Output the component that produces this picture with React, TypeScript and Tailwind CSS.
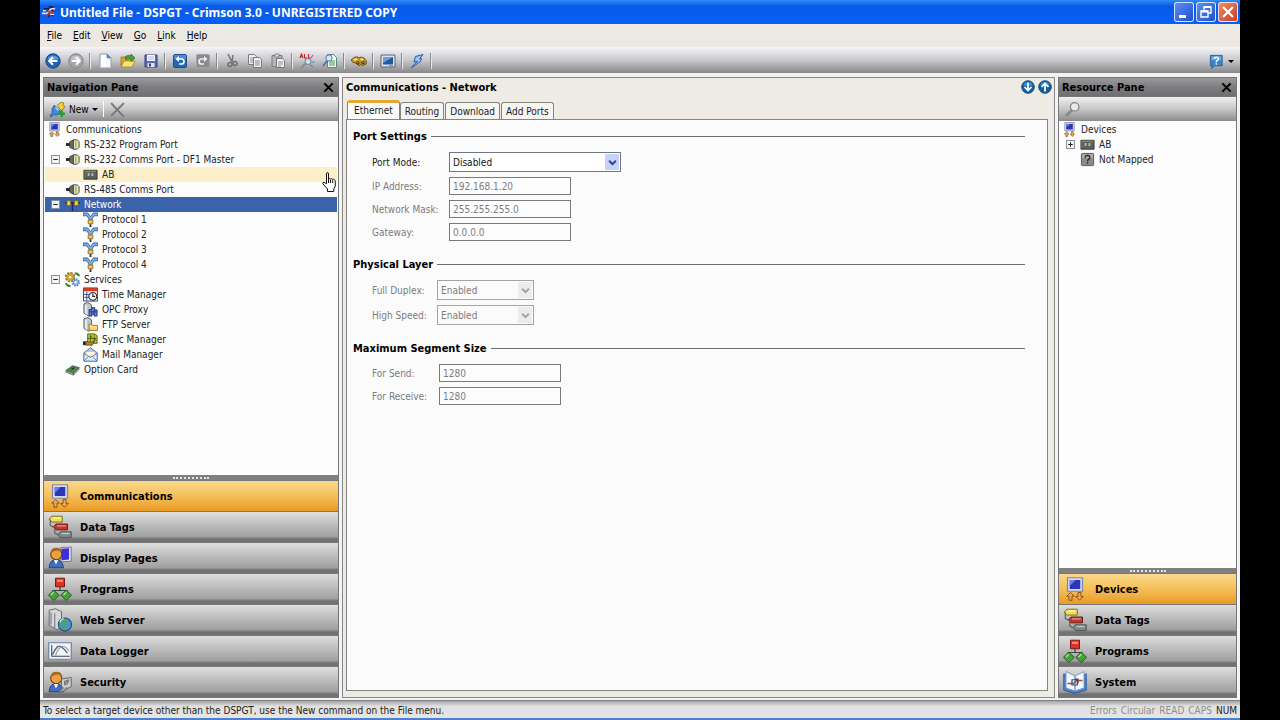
import type { ReactNode } from 'react';
import clsx from 'clsx';

type IconProps = { className?: string };

function Svg({ className = 'size-4', children }: IconProps & { children: ReactNode }) {
  return (
    <svg viewBox="0 0 16 16" className={clsx('shrink-0', className)} fill="none" aria-hidden="true">
      {children}
    </svg>
  );
}

/* ---------- window and toolbar icons ---------- */

const AppIcon = () => (
  <Svg className="size-[15px]">
    <path d="M3 4h5v9M8 2h4v10" stroke="#12235c" strokeWidth="1.800" />
    <path d="M1 9h5l5-5h4" stroke="#f4d9cf" strokeWidth="1.800" />
    <path d="M4 7h8M5 12l6-4h3" stroke="#b8402f" strokeWidth="1.500" />
    <path d="M2 6h3M10 10h4" stroke="#e8edff" strokeWidth="1.200" />
  </Svg>
);

const BackIcon = () => (
  <Svg>
    <circle cx="8" cy="8" r="7.2" fill="#1f62b4" stroke="#174a8c" />
    <path d="M2.5 6A6 6 0 0 1 13.5 6Q8 8 2.5 6z" fill="#5b9be0" />
    <path d="M12.5 8H4.5M8 4.3L4.2 8L8 11.7" stroke="#fff" strokeWidth="2" />
  </Svg>
);

const ForwardIcon = () => (
  <Svg>
    <circle cx="8" cy="8" r="7.2" fill="#a5a5a5" stroke="#858585" />
    <path d="M2.5 6A6 6 0 0 1 13.5 6Q8 8 2.5 6z" fill="#c4c4c4" />
    <path d="M3.5 8h8M8 4.3L11.8 8L8 11.7" stroke="#fff" strokeWidth="2" />
  </Svg>
);

const NewFileIcon = () => (
  <Svg>
    <path d="M3 1h7l4 4v10H3z" fill="#f4f8fd" stroke="#93a0b3" />
    <path d="M10 1v4h4z" fill="#4e8fd6" stroke="#4a7cb8" strokeWidth=".7" />
    <path d="M4 2h5v12H4z" fill="#fff" />
  </Svg>
);

const OpenIcon = () => (
  <Svg>
    <path d="M1 13V4h4l1 2h6v7z" fill="#d9a62c" stroke="#9a7420" strokeWidth=".8" />
    <path d="M1 14l3-6h11l-3 6z" fill="#fbe37b" stroke="#a98220" strokeWidth=".8" />
    <path d="M5 4q3-3 6-1V1l4 4-4 3.500V6Q8 4 6 7z" fill="#3fa535" stroke="#226b1d" strokeWidth=".6" />
  </Svg>
);

const SaveIcon = () => (
  <Svg>
    <path d="M2 2h12v12H2z" fill="#5a6bb5" stroke="#34417f" />
    <path d="M4 2h8v6H4z" fill="#f5f7fc" />
    <path d="M5 4h6M5 6h6" stroke="#b6bdd4" />
    <path d="M4.500 10h7v4h-7z" fill="#dfe3ee" />
    <path d="M6 10.500h2v3H6z" fill="#34417f" />
  </Svg>
);

const UndoIcon = () => (
  <Svg>
    <rect x="1.500" y="1.500" width="13" height="13" rx="1.500" fill="#2167b8" stroke="#1a4f92" />
    <path d="M2 2h12v4H2z" fill="#4a8dd6" />
    <path d="M5 6h4.500a2.300 2.300 0 0 1 0 5H7" stroke="#fff" strokeWidth="1.700" />
    <path d="M3.500 6L7 3v6z" fill="#fff" />
  </Svg>
);

const RedoIcon = () => (
  <Svg>
    <rect x="1.500" y="1.500" width="13" height="13" rx="1.500" fill="#8b8b8b" stroke="#a0a0a0" />
    <path d="M11 6H6.500a2.300 2.300 0 0 0 0 5H9" stroke="#eee" strokeWidth="1.700" />
    <path d="M12.500 6L9 3v6z" fill="#eee" />
  </Svg>
);

const CutIcon = () => (
  <Svg>
    <path d="M4 1l4 8M9 2L8 9" stroke="#777" strokeWidth="1.600" />
    <circle cx="6" cy="11.500" r="2" stroke="#6d6d6d" strokeWidth="1.400" />
    <circle cx="11" cy="10.500" r="2" stroke="#6d6d6d" strokeWidth="1.400" />
  </Svg>
);

const CopyIcon = () => (
  <Svg>
    <path d="M1.500 1.500h6l2 2v8h-8z" fill="#eee" stroke="#808080" />
    <path d="M3 5h4M3 7h4M3 9h3" stroke="#999" />
    <path d="M6.500 4.500h6l2 2v8h-8z" fill="#f2f2f2" stroke="#777" />
    <path d="M8 8h5M8 10h5M8 12h5" stroke="#8a8a8a" />
  </Svg>
);

const PasteIcon = () => (
  <Svg>
    <path d="M2 2.500h10v11H2z" fill="#b5b5b5" stroke="#7b7b7b" />
    <path d="M5 1h4v3H5z" fill="#ddd" stroke="#7b7b7b" strokeWidth=".8" />
    <path d="M6.500 5.500h6l2 2v7h-8z" fill="#f1f1f1" stroke="#777" />
    <path d="M8 9h5M8 11h5M8 13h3" stroke="#8f8f8f" />
  </Svg>
);

const FindAllIcon = () => (
  <Svg>
    <path d="M1 5l1.500-4L4 5M1.500 3.800h2M5.500 1v4h2.500M9.500 1v4H12" stroke="#c62424" strokeWidth="1.100" />
    <path d="M7 10l-5 5" stroke="#8b8b8b" strokeWidth="2" />
    <circle cx="9" cy="8.500" r="3" fill="#c9e2f6" stroke="#6c8198" />
    <path d="M12 5l2-3M12.500 9h3M11 12l3 2" stroke="#5a84b4" strokeWidth="1.200" />
  </Svg>
);

const FindPageIcon = () => (
  <Svg>
    <path d="M5.500 1.500h6l3 3v10h-9z" fill="#f5fbf5" stroke="#5b8a6a" />
    <path d="M7 8h6M7 10h6M7 12h6" stroke="#3f9a50" strokeWidth="1.200" />
    <circle cx="7" cy="5" r="3.200" fill="#cfe6f8" stroke="#52779c" />
    <path d="M5 8l-4 5" stroke="#50749b" strokeWidth="2" />
  </Svg>
);

const BinocularsIcon = () => (
  <Svg>
    <path d="M0 7l4-3h3l1 1 2-1 3 1 3 4-1 2-3 1.500-2-1L8 13l-3-3-3-.500z" fill="#c4931f" stroke="#5f430a" strokeWidth=".8" />
    <path d="M2 6.500l3-1.500 2 1.500-3 1.500zM9 6l2-1 2 2-2 1z" fill="#f7df7e" />
    <circle cx="6.800" cy="10" r="1.700" fill="#4b3a16" />
    <circle cx="12" cy="9.500" r="1.700" fill="#4b3a16" />
    <path d="M6.300 9.600h1M11.500 9.100h1" stroke="#f2e2ae" />
  </Svg>
);

const DisplayIcon = () => (
  <Svg>
    <path d="M1 2h14v12H1z" fill="#dbe2ea" stroke="#5a6778" />
    <path d="M3 4h10v7.500H3z" fill="#2556a0" />
    <path d="M3 4h10L3 10z" fill="#6f9ed8" />
    <path d="M9 12.800h4" stroke="#6c7a8c" />
  </Svg>
);

const LightningIcon = () => (
  <Svg>
    <path d="M14 1.500L6.500 3.500 5 9l3.500-.800L2 15l9.500-6.500 1-3-2 .500z" fill="#9cc6f4" stroke="#2a5aa5" />
  </Svg>
);

const HelpIcon = () => (
  <Svg className="size-[15px]">
    <path d="M1.500 1.500h12.500v11H6L3 15.500v-3H1.500z" fill="#3d84c8" stroke="#28619e" />
    <path d="M2.500 2.500h10.500v4H2.500z" fill="#6fabe0" />
    <path d="M5.700 5.300q0-2 2.200-2t2.200 1.900q0 1.200-1.300 1.700T7.800 9" stroke="#fff" strokeWidth="1.500" />
    <path d="M7 9.900h1.700v1.500H7z" fill="#fff" />
  </Svg>
);

const PlugIcon = () => (
  <Svg className="size-[17px]">
    <path d="M8 4q3-4 6-2-1 1-1 2t2 1q-1 3-4 4z" fill="#f0d244" stroke="#8b7517" strokeWidth=".8" />
    <path d="M5 4l6 6-3 3H4l-2 2-1-1 2-3V7z" fill="#3f8de0" stroke="#1c4d8c" strokeWidth=".8" />
    <path d="M6 6l3 3" stroke="#bfe0ff" strokeWidth="1.300" />
    <path d="M12 9v6M9 12h6" stroke="#2f9a38" strokeWidth="2.400" />
  </Svg>
);

const DeleteIcon = () => (
  <Svg className="size-[17px]">
    <path d="M2 2l12 13M14 2L2 14" stroke="#777" strokeWidth="1.800" />
  </Svg>
);

const SearchIcon = () => (
  <Svg className="size-[17px]">
    <path d="M8 8l-6 6" stroke="#888" strokeWidth="2.600" />
    <circle cx="10" cy="5.500" r="4" fill="#e9e9e9" stroke="#858585" strokeWidth="1.200" />
  </Svg>
);

const CloseIcon = () => (
  <Svg className="size-[11px]">
    <path d="M2 2l12 12M14 2L2 14" stroke="#000" strokeWidth="3" />
  </Svg>
);

function RoundArrow({ up = false }: { up?: boolean }) {
  return (
    <Svg className="size-[14px]">
      <circle cx="8" cy="8" r="7.200" fill="#175f9c" stroke="#0f4675" />
      <path d="M2.500 6A6 6 0 0 1 13.500 6Q8 8 2.500 6z" fill="#3f8fd0" />
      <path
        d={up ? 'M8 13V4.500M4 8l4-4 4 4' : 'M8 3v8.500M4 8l4 4 4-4'}
        stroke="#fff"
        strokeWidth="2"
      />
    </Svg>
  );
}

/* ---------- tree and category icons ---------- */

const CommsIcon = ({ className }: IconProps) => (
  <Svg className={className}>
    <path d="M3 .5h10v9H3z" fill="#d6dae8" stroke="#7f86a8" strokeWidth=".8" />
    <path d="M4.500 2h7v6h-7z" fill="#2b35b8" />
    <path d="M4.500 2h4l-4 4z" fill="#6d7be6" />
    <path d="M2.500 12.800L5 10.300l2.500 2.500H6v2.700H4v-2.700z" fill="#eba95a" stroke="#7d4d18" strokeWidth=".6" />
    <path d="M8.500 13l2.500 2.500 2.500-2.500H12v-2.700h-2V13z" fill="#eba95a" stroke="#7d4d18" strokeWidth=".6" />
  </Svg>
);

const PortIcon = ({ className }: IconProps) => (
  <Svg className={className}>
    <path d="M1 6.500h5v3H1z" fill="#222" />
    <path d="M5 5l4-2v10l-4-2z" fill="#6a6a6a" stroke="#333" strokeWidth=".8" />
    <path d="M9 3h4l2 2v6l-2 2H9z" fill="#e6e5b4" stroke="#444" />
    <path d="M11.500 4.500v7" stroke="#a3ad56" strokeWidth="1.400" />
  </Svg>
);

const DeviceIcon = ({ className }: IconProps) => (
  <Svg className={className}>
    <path d="M1 3.500h14v9.500H1z" fill="#5e605c" stroke="#33362f" />
    <path d="M2 4.500h12" stroke="#8f958a" />
    <path d="M5 6.500h2v3H5zM9 6.500h2v3H9z" fill="#b4b9b0" />
    <path d="M2 5v7" stroke="#5d8a55" />
  </Svg>
);

const UnmappedIcon = ({ className }: IconProps) => (
  <Svg className={className}>
    <rect x="1.500" y="1.500" width="13" height="13" rx="1" fill="#8b8b8b" stroke="#555" />
    <path d="M2.500 2.500h11v4h-11z" fill="#b4b4b4" />
    <path d="M5.500 6q0-2.300 2.500-2.300T10.500 6q0 1.300-1.300 1.800T8 10" stroke="#2c2c2c" strokeWidth="1.500" />
    <path d="M7.200 11h1.600v1.600H7.200z" fill="#2c2c2c" />
  </Svg>
);

const NetworkIcon = ({ className }: IconProps) => (
  <Svg className={className}>
    <path d="M0 6h16M8 6v9" stroke="#1d2f52" strokeWidth="1.600" />
    <path d="M2 4h4v5H2zM10 4h4v5h-4z" fill="#f2cf52" stroke="#7b6318" strokeWidth=".8" />
  </Svg>
);

const ProtocolIcon = ({ className }: IconProps) => (
  <Svg className={className}>
    <path d="M0 1h5l3 4 3-4h5v3h-4L9.500 7.500V9h-3V7.500L4 4H0z" fill="#7eb0e2" stroke="#28568a" strokeWidth=".9" />
    <path d="M5.500 8.500h5v4h-5z" fill="#f2c655" stroke="#8a651a" strokeWidth=".9" />
    <path d="M8 13v3" stroke="#333" strokeWidth="2" />
  </Svg>
);

const ServicesIcon = ({ className }: IconProps) => (
  <Svg className={className}>
    <circle cx="5.500" cy="5.500" r="3.600" stroke="#8e6a12" strokeWidth="3.800" strokeDasharray="1.900 .9" />
    <circle cx="5.500" cy="5.500" r="3" stroke="#d3a02a" strokeWidth="2.400" />
    <circle cx="11.500" cy="11" r="3" stroke="#4d86bd" strokeWidth="2.800" strokeDasharray="1.600 .7" />
    <circle cx="11.500" cy="11" r="2" fill="#eaf4fd" stroke="#6aa2d6" />
    <path d="M10.500 1.500q3.500 0 4.500 3M1 12q1 3 5 3" stroke="#3f8f3a" strokeWidth="2.400" />
  </Svg>
);

const TimeIcon = ({ className }: IconProps) => (
  <Svg className={className}>
    <path d="M.5 1h15v14H.5z" fill="#f4f6fb" stroke="#2f3f78" />
    <path d="M1 1h14v3.500H1z" fill="#d33a22" />
    <path d="M1 8h6M1 11h6M4 5v10" stroke="#3350a0" />
    <circle cx="10.500" cy="10" r="4.200" fill="#fff" stroke="#333" strokeWidth="1.200" />
    <path d="M10.500 7v3h2.500" stroke="#222" strokeWidth="1.200" />
  </Svg>
);

const ServerBody = () => (
  <>
    <path d="M1 2l4-1.500L9 3v11l-3 1-5-3z" fill="#c6ccd4" stroke="#3f444c" strokeWidth=".9" />
    <path d="M5 4v11" stroke="#6b727c" />
    <path d="M2 3l3 1v10l-3-2z" fill="#e5e9ee" />
  </>
);

const OpcIcon = ({ className }: IconProps) => (
  <Svg className={className}>
    <ServerBody />
    <path d="M6.500 8h3V6h3v2.500H15V15h-3v-2H9.500v2h-3z" fill="#6f86d2" stroke="#1b2f86" />
    <path d="M9 9v4M12 8v6M7 10.500h8" stroke="#1b2f86" strokeWidth=".9" />
  </Svg>
);

const FtpIcon = ({ className }: IconProps) => (
  <Svg className={className}>
    <ServerBody />
    <path d="M6.500 14.500v-7h3l1 1.500h5v5.500z" fill="#f6d165" stroke="#96701a" strokeWidth=".9" />
    <path d="M7 10.500h8" stroke="#fdeeb0" />
  </Svg>
);

const SyncIcon = ({ className }: IconProps) => (
  <Svg className={className}>
    <path d="M5 2h8l2 2v8H5z" fill="#c5c838" stroke="#515a12" />
    <path d="M7 4h3v3H7zM11 6h3v3h-3z" fill="#5f9a2f" />
    <path d="M8 3v8M12 3v8M5 7h9" stroke="#4a5312" strokeWidth=".8" />
    <path d="M0 10h3v4H0z" fill="#222" />
    <path d="M3 10l5 1 4-1-2 4H3z" fill="#b98a35" stroke="#4f3508" strokeWidth=".8" />
  </Svg>
);

const MailIcon = ({ className }: IconProps) => (
  <Svg className={className}>
    <path d="M1 6l7-5 7 5v9H1z" fill="#bcd6f0" stroke="#3f6694" />
    <path d="M3 4.500h10V10H3z" fill="#fff7df" stroke="#b49c62" strokeWidth=".7" />
    <path d="M1 7l7 4 7-4v8H1z" fill="#dcebfa" stroke="#4e76a5" strokeWidth=".8" />
    <path d="M1 15l5-5M15 15l-5-5" stroke="#4e76a5" strokeWidth=".8" />
  </Svg>
);

const CardIcon = ({ className }: IconProps) => (
  <Svg className={className}>
    <path d="M1 9l7-5 7 2-6 6z" fill="#4d8d50" stroke="#254f2a" strokeWidth=".8" />
    <path d="M1 9v2l8 3v-2zM9 12l6-6v2l-6 6z" fill="#a7aca2" stroke="#4a4f48" strokeWidth=".6" />
    <path d="M6 7.500l3-2 2 .7-3 2.300z" fill="#224024" />
  </Svg>
);

const TagsIcon = ({ className }: IconProps) => (
  <Svg className={className}>
    <path d="M2.500.8H9.500v3.900h-7L.8 2.800z" fill="#f2e04a" stroke="#76691c" strokeWidth=".6" />
    <path d="M5.300 6h7.700v3.900H5.300L3.700 8z" fill="#c8352a" stroke="#5c1712" strokeWidth=".6" />
    <path d="M8.300 11.200H15.500v3.900H8.300l-1.700-1.900z" fill="#7f8786" stroke="#4a504f" strokeWidth=".6" />
    <path d="M1.500 3v4l2 1M4.500 9.500v2.500l2 1.200" stroke="#555" strokeWidth=".7" />
    <path d="M3.500 2h5M6 7.200h6M9 12.300h5.500" stroke="#ffffff" strokeOpacity=".5" strokeWidth=".9" />
  </Svg>
);

const PersonBody = () => (
  <>
    <path d="M.8 14.500q0-5 4.500-5.500 4.500.5 5 5.500z" fill="#3f6fc0" stroke="#1e3a70" strokeWidth=".6" />
    <path d="M4 9.300l1.300 3 1.500-3z" fill="#fff" />
    <circle cx="5.500" cy="5.500" r="3.700" fill="#e8a045" stroke="#6b3d0e" strokeWidth=".7" />
    <path d="M1.800 4.500Q2 1.200 5.500 1.200t3.700 2.600Q6.500 2.600 4.500 3.400T1.800 4.500z" fill="#a8651f" />
  </>
);

const PagesIcon = ({ className }: IconProps) => (
  <Svg className={className}>
    <path d="M8.500 1l7-.3v9.500l-7 .3z" fill="#d9ddeb" stroke="#6d7390" strokeWidth=".6" />
    <path d="M9 1.800l5-.3v7.500l-5 .5z" fill="#3a2fd8" />
    <PersonBody />
  </Svg>
);

const ProgramsIcon = ({ className }: IconProps) => (
  <Svg className={className}>
    <path d="M8 6v3M3.500 11V9h9v2" stroke="#3b4a3b" strokeWidth=".8" />
    <path d="M5 .8h6v5.700H5z" fill="#dc3323" stroke="#6d140c" strokeWidth=".6" />
    <path d="M6 1.800h4v1.500H6z" fill="#f2877a" />
    <path d="M.3 12.200L3.800 8.700l3.700 3.500-3.700 3.500zM8.500 12.200l3.700-3.500 3.500 3.500-3.500 3.500z" fill="#47a03c" stroke="#1d5a18" strokeWidth=".6" />
    <path d="M2 12l1.800-1.800M10.400 12l1.800-1.800" stroke="#a9e39b" />
  </Svg>
);

const WebIcon = ({ className }: IconProps) => (
  <Svg className={className}>
    <path d="M.8 1.500L5 .5l4 2v10l-3 2-5.200-3z" fill="#d5d8da" stroke="#5d6164" strokeWidth=".6" />
    <path d="M4.500 3.500v10M2 3v8" stroke="#7f8488" strokeWidth=".8" />
    <circle cx="11.300" cy="11" r="4.400" fill="#4e93c8" stroke="#204c74" strokeWidth=".7" />
    <path d="M9 7.800q3-1 4 1l-2 2 1 3q-3-.5-3.500-3z" fill="#4da552" />
    <path d="M8 9.500q.5-2 2.500-2.500" stroke="#d5efff" strokeWidth=".8" />
  </Svg>
);

const LoggerIcon = ({ className }: IconProps) => (
  <Svg className={className}>
    <path d="M.5 2.500h15v11H.5z" fill="#f1f5fa" stroke="#6584ad" strokeWidth=".8" />
    <path d="M2.500 4v7.500h12" stroke="#444" strokeWidth=".7" />
    <path d="M3 10.500Q6 3.500 8.500 5T13 9.500" stroke="#4f5f63" strokeWidth=".9" />
    <path d="M5 11q2-6 5-6 2 0 4 3" stroke="#90a097" strokeWidth=".8" />
  </Svg>
);

const SecurityIcon = ({ className }: IconProps) => (
  <Svg className={className}>
    <PersonBody />
    <path d="M9 6l6.500-1v6l-4 2-2.500-2z" fill="#c9cccd" stroke="#5f6466" strokeWidth=".6" />
    <path d="M10 12l-3 3 4-1 1.500-2.500" fill="#a2a7aa" stroke="#61666a" strokeWidth=".6" />
    <path d="M14 6.500l-3 1v2.500l2-.800z" fill="#8b9092" stroke="#666" strokeWidth=".5" />
  </Svg>
);

const SystemIcon = ({ className }: IconProps) => (
  <Svg className={className}>
    <path d="M.5 2.500v11L8 15.500l7.500-2v-11L13 4v8l-5 1.500L3 12V4z" fill="#4d84cf" stroke="#2a569b" strokeWidth=".6" />
    <path d="M2 1l6 3v10l-6-2zM14 1L8 4v10l6-2z" fill="#f2f7fd" stroke="#6d95c9" strokeWidth=".6" />
    <path d="M3 9h4l2-2h4" stroke="#c0432e" strokeWidth=".9" />
    <path d="M6 6.500h3.500v3.500H6zM8 6h2v3" stroke="#394a6a" strokeWidth=".8" />
  </Svg>
);

/* ---------- data ---------- */

type Icon = (props: IconProps) => ReactNode;

interface TreeItem {
  label: string;
  level: 0 | 1 | 2;
  icon: Icon;
  expander?: 'open' | 'closed';
  state?: 'hover' | 'selected';
}

interface Category {
  label: string;
  icon: Icon;
  active?: boolean;
}

const navTree: TreeItem[] = [
  { label: 'Communications', level: 0, icon: CommsIcon },
  { label: 'RS-232 Program Port', level: 1, icon: PortIcon },
  { label: 'RS-232 Comms Port - DF1 Master', level: 1, icon: PortIcon, expander: 'open' },
  { label: 'AB', level: 2, icon: DeviceIcon, state: 'hover' },
  { label: 'RS-485 Comms Port', level: 1, icon: PortIcon },
  { label: 'Network', level: 1, icon: NetworkIcon, expander: 'open', state: 'selected' },
  { label: 'Protocol 1', level: 2, icon: ProtocolIcon },
  { label: 'Protocol 2', level: 2, icon: ProtocolIcon },
  { label: 'Protocol 3', level: 2, icon: ProtocolIcon },
  { label: 'Protocol 4', level: 2, icon: ProtocolIcon },
  { label: 'Services', level: 1, icon: ServicesIcon, expander: 'open' },
  { label: 'Time Manager', level: 2, icon: TimeIcon },
  { label: 'OPC Proxy', level: 2, icon: OpcIcon },
  { label: 'FTP Server', level: 2, icon: FtpIcon },
  { label: 'Sync Manager', level: 2, icon: SyncIcon },
  { label: 'Mail Manager', level: 2, icon: MailIcon },
  { label: 'Option Card', level: 1, icon: CardIcon },
];

const resourceTree: TreeItem[] = [
  { label: 'Devices', level: 0, icon: CommsIcon },
  { label: 'AB', level: 1, icon: DeviceIcon, expander: 'closed' },
  { label: 'Not Mapped', level: 1, icon: UnmappedIcon },
];

const navCategories: Category[] = [
  { label: 'Communications', icon: CommsIcon, active: true },
  { label: 'Data Tags', icon: TagsIcon },
  { label: 'Display Pages', icon: PagesIcon },
  { label: 'Programs', icon: ProgramsIcon },
  { label: 'Web Server', icon: WebIcon },
  { label: 'Data Logger', icon: LoggerIcon },
  { label: 'Security', icon: SecurityIcon },
];

const resourceCategories: Category[] = [
  { label: 'Devices', icon: CommsIcon, active: true },
  { label: 'Data Tags', icon: TagsIcon },
  { label: 'Programs', icon: ProgramsIcon },
  { label: 'System', icon: SystemIcon },
];

const menus = ['File', 'Edit', 'View', 'Go', 'Link', 'Help'];

const toolGroups: { label: string; icon: Icon }[][] = [
  [
    { label: 'Back', icon: BackIcon },
    { label: 'Forward', icon: ForwardIcon },
  ],
  [
    { label: 'New', icon: NewFileIcon },
    { label: 'Open', icon: OpenIcon },
    { label: 'Save', icon: SaveIcon },
  ],
  [
    { label: 'Undo', icon: UndoIcon },
    { label: 'Redo', icon: RedoIcon },
  ],
  [
    { label: 'Cut', icon: CutIcon },
    { label: 'Copy', icon: CopyIcon },
    { label: 'Paste', icon: PasteIcon },
  ],
  [
    { label: 'Find all', icon: FindAllIcon },
    { label: 'Find in page', icon: FindPageIcon },
  ],
  [{ label: 'Find', icon: BinocularsIcon }],
  [{ label: 'Emulator', icon: DisplayIcon }],
  [{ label: 'Send', icon: LightningIcon }],
];

/* ---------- window chrome ---------- */

function TitleBar() {
  const box = 'flex size-5 items-center justify-center rounded-[3px] border border-white/80';
  return (
    <header className="flex h-6 shrink-0 items-center gap-1 bg-linear-to-b from-[#2f8cf8] via-[#0a5ae6] via-25% to-[#0560f8] pr-[2px] pl-px">
      <AppIcon />
      <h1 className="flex-1 font-['Noto_Sans','DejaVu_Sans_Condensed',sans-serif] text-[12px] font-bold text-white">
        Untitled File - DSPGT - Crimson 3.0 - UNREGISTERED COPY
      </h1>
      <div className="flex gap-[2px]">
        <button aria-label="Minimize" className={clsx(box, 'bg-linear-to-br from-[#5c8df0] to-[#1f4fd0]')}>
          <Svg className="size-4">
            <path d="M3 11h7v3H3z" fill="#fff" />
          </Svg>
        </button>
        <button aria-label="Restore" className={clsx(box, 'bg-linear-to-br from-[#5c8df0] to-[#1f4fd0]')}>
          <Svg className="size-4">
            <path d="M6 6V3h7v6h-2.500" stroke="#fff" strokeWidth="1.400" />
            <path d="M6 3h7M3 7.500h7" stroke="#fff" strokeWidth="2" />
            <path d="M3 7h7v6H3z" stroke="#fff" strokeWidth="1.400" />
          </Svg>
        </button>
        <button aria-label="Close" className={clsx(box, 'bg-linear-to-br from-[#ee8a6c] to-[#c8391a]')}>
          <Svg className="size-4">
            <path d="M3 3l10 10M13 3L3 13" stroke="#fff" strokeWidth="2.200" />
          </Svg>
        </button>
      </div>
    </header>
  );
}

function MenuBar() {
  return (
    <nav className="flex h-[23px] shrink-0 items-center gap-[11px] bg-[#ece9e2] pl-[7px] text-black">
      {menus.map((m) => (
        <button key={m}>
          <span className="underline underline-offset-1">{m[0]}</span>
          {m.slice(1)}
        </button>
      ))}
    </nav>
  );
}

function Toolbar() {
  return (
    <div className="flex h-[26px] shrink-0 items-center bg-linear-to-b from-[#f6f6f9] via-[#c9c9cd] via-50% to-[#88888a] pt-[2px] pr-[6px] pl-px">
      {toolGroups.map((group, i) => (
        <div key={i} className="flex items-center">
          {group.map(({ label, icon: ToolIcon }) => (
            <button key={label} aria-label={label} className="flex w-[23px] justify-center">
              <ToolIcon />
            </button>
          ))}
          <span className="mx-[2px] h-4 w-[2px] border-r border-white/80 bg-[#8a8a8e]" />
        </div>
      ))}
      <button aria-label="Help" className="ml-auto flex items-center gap-1">
        <HelpIcon />
        <span className="border-x-[3px] border-t-[3px] border-x-transparent border-t-black" />
      </button>
    </div>
  );
}

function StatusBar() {
  return (
    <footer className="flex h-[17px] shrink-0 items-center gap-1 bg-linear-to-b from-[#a4a4a4] via-[#e0e0e0] via-30% to-[#e6e6e6] px-[3px] pt-[2px] text-[#222]">
      <p className="flex-1">To select a target device other than the DSPGT, use the New command on the File menu.</p>
      <span className="text-[#8e8e8e]">Errors</span>
      <span className="text-[#8e8e8e]">Circular</span>
      <span className="text-[#8e8e8e]">READ</span>
      <span className="text-[#8e8e8e]">CAPS</span>
      <span>NUM</span>
    </footer>
  );
}

/* ---------- side panes ---------- */

function Tree({ items }: { items: TreeItem[] }) {
  return (
    <ul className="min-h-0 flex-1 bg-[#fdfdfd] px-px pt-px">
      {items.map((item, i) => (
        <li
          key={i}
          className={clsx(
            'flex h-[15px] items-center gap-1',
            item.level === 0 && 'pl-[2px]',
            item.level === 1 && 'pl-[6px]',
            item.level === 2 && 'pl-[38px]',
            item.state === 'hover' && 'bg-[#fcefc9]',
            item.state === 'selected' ? 'bg-[#3a63a8] text-white' : 'text-[#222]',
          )}
        >
          {item.level === 1 && (
            <span className="flex w-[10px] items-center">
              {item.expander && (
                <Svg className="size-[9px]">
                  <path d="M1 1h14v14H1z" fill="#f4f4f4" stroke="#8a8f98" strokeWidth="1.800" />
                  <path d={item.expander === 'open' ? 'M4 8h8' : 'M4 8h8M8 4v8'} stroke="#222" strokeWidth="1.800" />
                </Svg>
              )}
            </span>
          )}
          <item.icon className="size-[15px]" />
          <span>{item.label}</span>
        </li>
      ))}
    </ul>
  );
}

function CategoryButton({ label, icon: CatIcon, active }: Category) {
  return (
    <button
      className={clsx(
        'flex h-[31px] w-full items-center gap-2 border-t border-t-[#77777a] pl-1 text-left text-[11px] font-bold text-black',
        active
          ? 'bg-linear-to-b from-[#f9d98a] via-[#f5bf58] to-[#e99a20]'
          : 'bg-linear-to-b from-[#dedede] via-[#a0a0a0] via-82% to-[#727272] to-90%',
      )}
    >
      <CatIcon className="size-6" />
      {label}
    </button>
  );
}

interface SidePaneProps {
  title: string;
  tools: ReactNode;
  items: TreeItem[];
  categories: Category[];
  className: string;
}

function SidePane({ title, tools, items, categories, className }: SidePaneProps) {
  return (
    <aside className={clsx('flex shrink-0 flex-col border border-[#77777a]', className)}>
      <div className="flex h-[18px] shrink-0 items-center justify-between bg-linear-to-b from-[#9a9a9d] via-[#7e7e81] to-[#6f6f72] pr-1 pl-[3px]">
        <h2 className="text-[11px] font-bold text-black">{title}</h2>
        <button aria-label={`Close ${title}`}>
          <CloseIcon />
        </button>
      </div>
      <div className="flex h-[25px] shrink-0 items-center border-t border-[#77777a] bg-linear-to-b from-[#f0f0f0] via-[#c6c6c8] via-50% to-[#8b8b8e] px-[5px]">
        {tools}
      </div>
      <Tree items={items} />
      <div className="flex h-[5px] shrink-0 items-center justify-center bg-[#808083]">
        <span className="w-9 border-t-2 border-dotted border-[#e4e4e4]" />
      </div>
      {categories.map((c) => (
        <CategoryButton key={c.label} {...c} />
      ))}
    </aside>
  );
}

/* ---------- settings form ---------- */

function Section({ title, columns, children }: { title: string; columns: string; children: ReactNode }) {
  return (
    <section className="flex flex-col gap-2">
      <div className="flex h-4 items-center gap-1">
        <h3 className="text-[11px] font-bold text-black">{title}</h3>
        <span className="flex-1 border-t border-[#6e6e6e]" />
      </div>
      <div className={clsx('grid items-center gap-y-[5px] pl-[19px]', columns)}>{children}</div>
    </section>
  );
}

function TextField({ id, label, value }: { id: string; label: string; value: string }) {
  return (
    <>
      <label htmlFor={id} className="text-[#7c7c7c]">
        {label}
      </label>
      <input
        id={id}
        type="text"
        defaultValue={value}
        disabled
        className="h-[18px] w-[122px] border border-[#77797c] bg-[#fdfdfd] px-[3px] text-[#7c7c7c]"
      />
    </>
  );
}

interface SelectFieldProps {
  id: string;
  label: string;
  options: string[];
  width: string;
  disabled?: boolean;
}

function SelectField({ id, label, options, width, disabled = false }: SelectFieldProps) {
  return (
    <>
      <label htmlFor={id} className={disabled ? 'text-[#7c7c7c]' : 'text-[#222]'}>
        {label}
      </label>
      <div className={clsx('relative h-5', width)}>
        <select
          id={id}
          disabled={disabled}
          className={clsx(
            'h-5 w-full appearance-none border px-[3px] opacity-100',
            disabled ? 'border-[#a3a3a3] bg-[#fbfbfb] text-[#7c7c7c]' : 'border-[#6f7680] bg-white text-[#111]',
          )}
        >
          {options.map((o) => (
            <option key={o}>{o}</option>
          ))}
        </select>
        <span
          className={clsx(
            'pointer-events-none absolute top-[2px] right-[2px] flex h-4 w-[14px] items-center justify-center',
            disabled ? 'bg-[#ececec]' : 'bg-[#c3d3fb]',
          )}
        >
          <Svg className="size-[9px]">
            <path d="M2 5l6 6 6-6" stroke={disabled ? '#a2a2a2' : '#2d4680'} strokeWidth="3.500" />
          </Svg>
        </span>
      </div>
    </>
  );
}

function TabStrip() {
  return (
    <div role="tablist" className="flex items-end gap-px pl-px text-[#222]">
      <button
        role="tab"
        aria-selected="true"
        className="-mr-px -mb-px h-5 rounded-t-[3px] border border-t-[3px] border-[#85857f] border-t-[#e8a733] border-b-[#fbfbfb] bg-[#fbfbfb] px-[6px] pb-px"
      >
        Ethernet
      </button>
      {['Routing', 'Download', 'Add Ports'].map((t) => (
        <button
          key={t}
          role="tab"
          aria-selected="false"
          className="h-[17px] rounded-t-[3px] border border-b-0 border-[#85857f] bg-[#f6f5f2] px-[4px]"
        >
          {t}
        </button>
      ))}
    </div>
  );
}

function MainPane() {
  return (
    <main className="flex min-w-0 flex-1 flex-col border border-[#88888a] bg-[#eeebe5] pr-[6px] pb-[6px] pl-[3px]">
      <div className="flex h-[18px] shrink-0 items-center">
        <h2 className="flex-1 text-[11px] font-bold text-black">Communications - Network</h2>
        <button aria-label="Next item">
          <RoundArrow />
        </button>
        <button aria-label="Previous item" className="-mr-1 ml-[3px]">
          <RoundArrow up />
        </button>
      </div>
      <div className="flex h-[23px] shrink-0 items-end">
        <TabStrip />
      </div>
      <form className="flex flex-1 flex-col gap-[15px] border border-[#85857f] bg-[#fbfbfb] py-2 pr-[22px] pl-[6px]">
        <Section title="Port Settings" columns="grid-cols-[77px_1fr]">
          <SelectField id="port-mode" label="Port Mode:" options={['Disabled', 'Enabled']} width="w-[172px]" />
          <TextField id="ip-address" label="IP Address:" value="192.168.1.20" />
          <TextField id="network-mask" label="Network Mask:" value="255.255.255.0" />
          <TextField id="gateway" label="Gateway:" value="0.0.0.0" />
        </Section>
        <Section title="Physical Layer" columns="grid-cols-[65px_1fr]">
          <SelectField id="full-duplex" label="Full Duplex:" options={['Enabled', 'Disabled']} width="w-[97px]" disabled />
          <SelectField id="high-speed" label="High Speed:" options={['Enabled', 'Disabled']} width="w-[97px]" disabled />
        </Section>
        <Section title="Maximum Segment Size" columns="grid-cols-[67px_1fr]">
          <TextField id="for-send" label="For Send:" value="1280" />
          <TextField id="for-receive" label="For Receive:" value="1280" />
        </Section>
      </form>
    </main>
  );
}

function HandPointer() {
  return (
    <svg viewBox="0 0 14 20" className="absolute top-[172px] left-[322px] h-5 w-[14px]" aria-hidden="true">
      <path
        d="M4.500 11V2q0-1.500 1-1.500T6.500 2v5q.8-1 2 0 1-.8 2 .3 1-.6 2 .5.8.4.800 1.500V14l-1.500 3v2.500H5.500V17L1 12q-.5-1.500.8-1.700T4.500 12z"
        fill="#fff"
        stroke="#111"
      />
      <path d="M6.500 7v4M8.500 7.500V11M10.700 8v3" stroke="#111" fill="none" />
    </svg>
  );
}

export default function App() {
  return (
    <div className="relative flex min-h-screen bg-black px-10 font-['DejaVu_Sans_Condensed','DejaVu_Sans',sans-serif] text-[10px] leading-[15px]">
      <div className="flex min-w-0 flex-1 flex-col border-b-2 border-[#4b7fd0] bg-[#f3f3f3]">
        <TitleBar />
        <MenuBar />
        <Toolbar />
        <div className="flex flex-1 gap-[3px] px-[3px] pt-1 pb-[2px]">
          <SidePane
            title="Navigation Pane"
            className="w-[296px]"
            items={navTree}
            categories={navCategories}
            tools={
              <>
                <button className="flex items-center gap-[3px] text-black">
                  <PlugIcon />
                  New
                  <span className="border-x-[3px] border-t-[3px] border-x-transparent border-t-black" />
                </button>
                <span className="mx-[5px] h-4 border-l border-white" />
                <button aria-label="Delete">
                  <DeleteIcon />
                </button>
              </>
            }
          />
          <MainPane />
          <SidePane
            title="Resource Pane"
            className="w-[179px]"
            items={resourceTree}
            categories={resourceCategories}
            tools={
              <button aria-label="Search">
                <SearchIcon />
              </button>
            }
          />
        </div>
        <div className="h-px shrink-0 bg-[#808083]" />
        <StatusBar />
      </div>
      <HandPointer />
    </div>
  );
}
